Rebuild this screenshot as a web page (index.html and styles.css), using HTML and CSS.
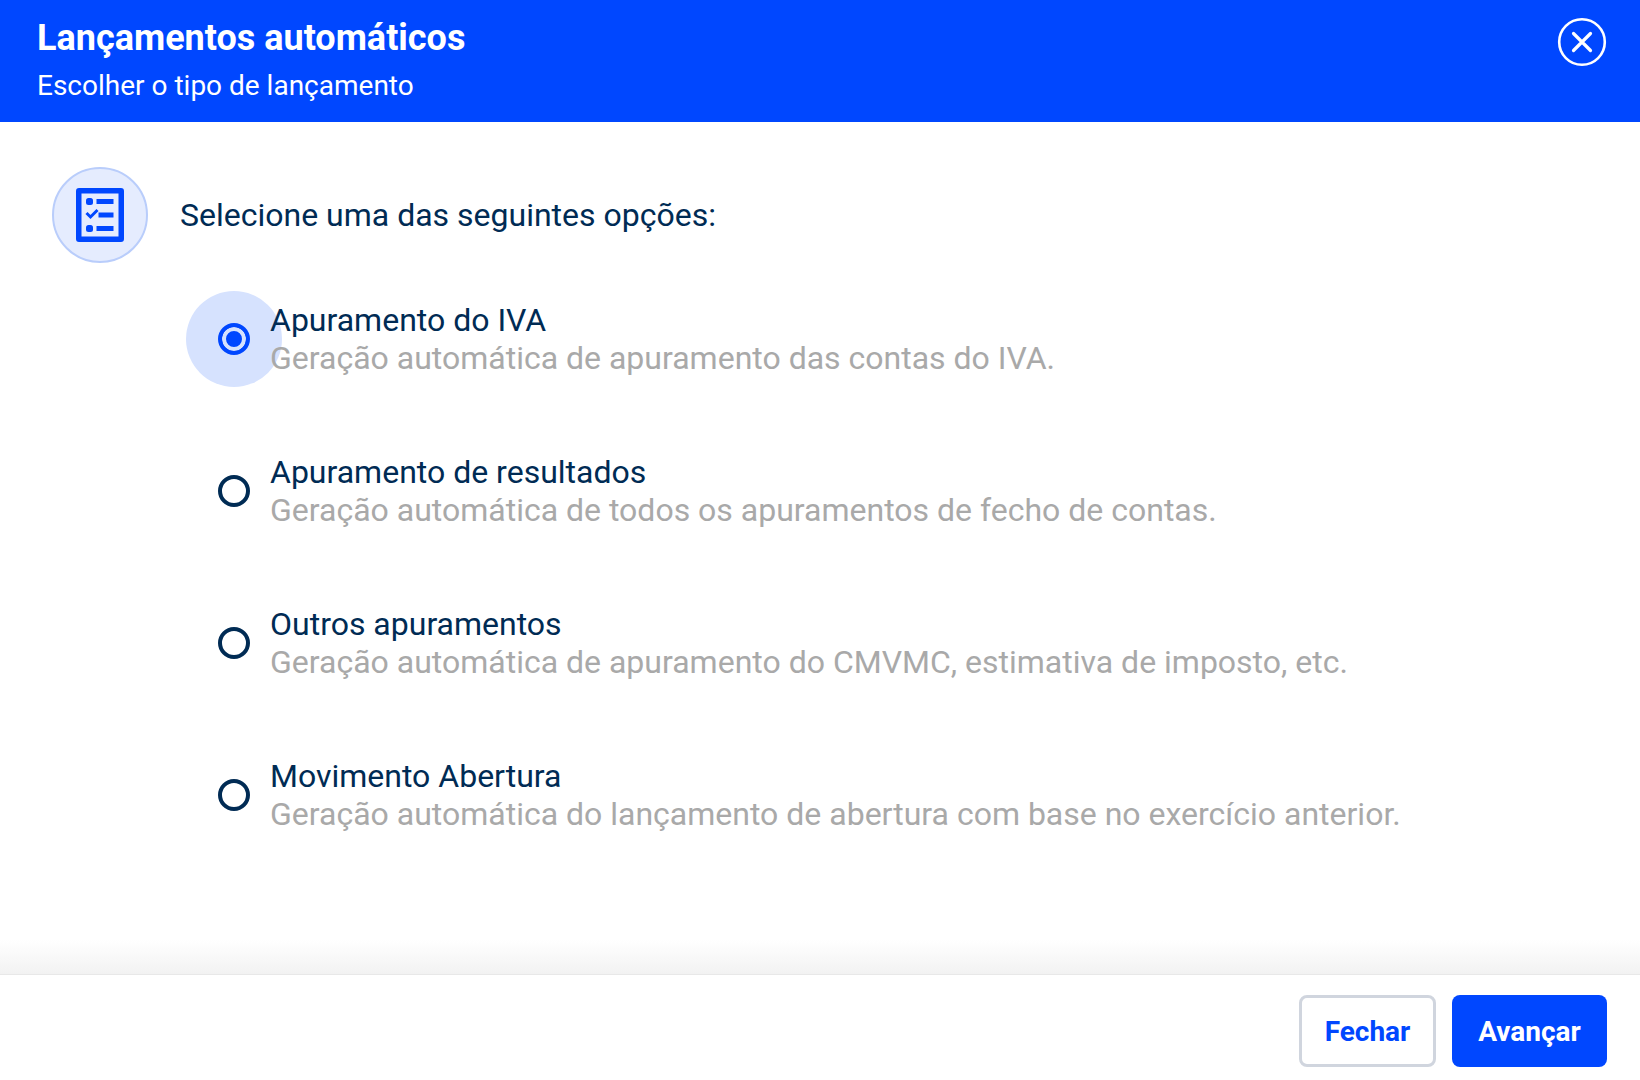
FILE: index.html
```html
<!DOCTYPE html>
<html lang="pt">
<head>
  <meta charset="UTF-8">
  <title>Lançamentos automáticos</title>
  <link rel="stylesheet" href="styles.css">
</head>
<body>
<div class="modal">
  <!-- HEADER -->
  <div class="modal-header">
    <div>
      <h1>Lançamentos automáticos</h1>
      <p>Escolher o tipo de lançamento</p>
    </div>
    <button class="close-btn" aria-label="Fechar">
      <svg width="50" height="50" viewBox="0 0 50 50" fill="none" stroke="#fff" stroke-linecap="round">
        <circle cx="25" cy="25" r="22.8" stroke-width="2.6"/>
        <path d="M16.5 16.5L33.5 33.5M33.5 16.5L16.5 33.5" stroke-width="3.2"/>
      </svg>
    </button>
  </div>

  <!-- BODY -->
  <div class="modal-body">
    <div class="intro">
      <div class="intro-icon">
        <svg width="48" height="54" viewBox="0 0 48 54">
          <path fill="#0047ff" fill-rule="evenodd" d="M3 0H45a3 3 0 0 1 3 3V51a3 3 0 0 1-3 3H3a3 3 0 0 1-3-3V3a3 3 0 0 1 3-3ZM5.500 5.500V48.500H42.500V5.500Z"/>
          <rect x="10" y="10" width="7" height="7" rx="2.5" fill="#0047ff"/>
          <rect x="20.500" y="11" width="17" height="5" fill="#0047ff"/>
          <path d="M10.500 25L14.500 29L21.500 22" fill="none" stroke="#0047ff" stroke-width="3"/>
          <rect x="22.500" y="24.500" width="15" height="5" fill="#0047ff"/>
          <rect x="10" y="37" width="7" height="7" rx="2.5" fill="#0047ff"/>
          <rect x="20.500" y="38" width="17" height="5" fill="#0047ff"/>
        </svg>
      </div>
      <span>Selecione uma das seguintes opções:</span>
    </div>

    <div class="options">
      <div class="option selected">
        <div class="radio-wrap"><div class="radio"></div></div>
        <div class="option-text">
          <div class="option-title">Apuramento do IVA</div>
          <div class="option-desc">Geração automática de apuramento das contas do IVA.</div>
        </div>
      </div>
      <div class="option">
        <div class="radio-wrap"><div class="radio"></div></div>
        <div class="option-text">
          <div class="option-title">Apuramento de resultados</div>
          <div class="option-desc">Geração automática de todos os apuramentos de fecho de contas.</div>
        </div>
      </div>
      <div class="option">
        <div class="radio-wrap"><div class="radio"></div></div>
        <div class="option-text">
          <div class="option-title">Outros apuramentos</div>
          <div class="option-desc">Geração automática de apuramento do CMVMC, estimativa de imposto, etc.</div>
        </div>
      </div>
      <div class="option">
        <div class="radio-wrap"><div class="radio"></div></div>
        <div class="option-text">
          <div class="option-title">Movimento Abertura</div>
          <div class="option-desc">Geração automática do lançamento de abertura com base no exercício anterior.</div>
        </div>
      </div>
    </div>
  </div>

  <!-- FOOTER -->
  <div class="modal-footer">
    <button class="btn btn-outline">Fechar</button>
    <button class="btn btn-primary">Avançar</button>
  </div>
</div>
</body>
</html>
```

FILE: styles.css
```css
:root{
  --blue:#0047ff;
  --navy:#002b54;
  --grey:#a9a9a9;
}
*{box-sizing:border-box;margin:0;padding:0;font-family:Roboto,"Liberation Sans",sans-serif}
html,body{height:100%}
body{background:#fff;overflow:hidden}
.modal{display:flex;flex-direction:column;height:1080px}

.modal-header{height:122px;flex:none;background:var(--blue);color:#fff;padding:16px 33px 0 37px;display:flex;justify-content:space-between;align-items:flex-start}
.modal-header h1{font-size:36px;font-weight:700;line-height:44px}
.modal-header p{font-size:28px;line-height:40px;margin-top:6px}
.close-btn{background:none;border:none;cursor:pointer;margin-top:1px;display:block}
.close-btn svg{display:block}

.modal-body{flex:1;padding:45px 0 0 52px;background:linear-gradient(to bottom,#fff calc(100% - 34px),#f2f2f2)}
.intro{display:flex;align-items:center;gap:32px;font-size:32px;color:var(--navy)}
.intro-icon{width:96px;height:96px;border-radius:50%;background:#e5ecfe;border:2px solid #b9cdfb;display:flex;align-items:center;justify-content:center}

.options{margin-top:28px;padding-left:134px;display:flex;flex-direction:column;gap:56px}
.option{display:flex;align-items:center;height:96px}
.radio-wrap{width:96px;height:96px;flex:none;border-radius:50%;display:flex;align-items:center;justify-content:center;margin-right:-12px}
.radio{width:32px;height:32px;border-radius:50%;border:4px solid var(--navy)}
.option.selected .radio-wrap{background:#d6e2fe}
.option.selected .radio{border-color:var(--blue);background:var(--blue);box-shadow:inset 0 0 0 4px #d6e2fe}
.option-text{position:relative}
.option-title{font-size:32px;line-height:38px;color:var(--navy)}
.option-desc{font-size:32px;line-height:38px;color:var(--grey)}

.modal-footer{height:106px;flex:none;background:#fff;border-top:1px solid #e8e8e8;padding:20px 33px 0 0;display:flex;justify-content:flex-end;gap:16px}
.btn{height:72px;border-radius:8px;font-size:28px;font-weight:700;cursor:pointer}
.btn-outline{width:137px;background:#fff;border:3px solid #d0d5de;color:var(--blue)}
.btn-primary{width:155px;background:var(--blue);border:none;color:#fff}
```
